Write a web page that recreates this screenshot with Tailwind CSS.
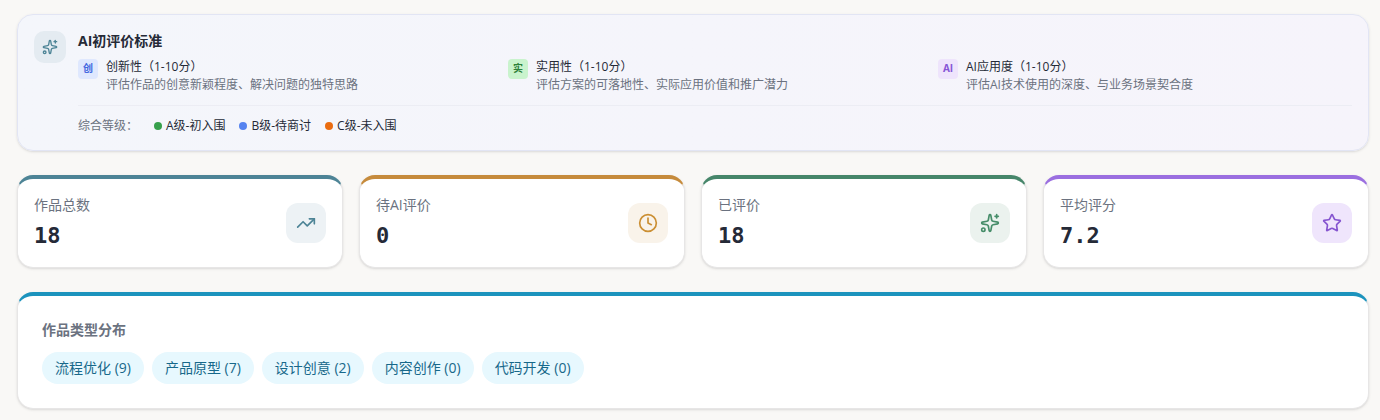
<!DOCTYPE html>
<html lang="zh-CN">
<head>
    <meta charset="UTF-8">
    <meta name="viewport" content="width=device-width, initial-scale=1.0">
    <title>AI初评价</title>
    <script src="https://cdn.jsdelivr.net/npm/@tailwindcss/browser@4"></script>
</head>
<body class="bg-[#f9f8f6] font-['Open_Sans','Noto_Sans_CJK_SC',sans-serif] text-[#252a37]">
    <!-- Shared icons -->
    <svg class="hidden">
        <symbol id="icon-sparkles" viewBox="0 0 24 24">
            <path d="M11.017 2.814a1 1 0 0 1 1.966 0l1.051 5.558a2 2 0 0 0 1.594 1.594l5.558 1.051a1 1 0 0 1 0 1.966l-5.558 1.051a2 2 0 0 0-1.594 1.594l-1.051 5.558a1 1 0 0 1-1.966 0l-1.051-5.558a2 2 0 0 0-1.594-1.594l-5.558-1.051a1 1 0 0 1 0-1.966l5.558-1.051a2 2 0 0 0 1.594-1.594z"/>
            <path d="M20 2v4"/>
            <path d="M22 4h-4"/>
            <circle cx="4" cy="20" r="2"/>
        </symbol>
    </svg>

    <main class="pt-[14px] pl-[17px] pr-[11px] pb-[11px] space-y-6">
        <!-- Criteria -->
        <section class="flex items-start gap-3 rounded-2xl border border-[#e2e5f4] bg-linear-to-r from-[#f4f6fb] to-[#f6f4fb] p-4 shadow-sm">
            <div class="flex size-8 shrink-0 items-center justify-center rounded-[10px] bg-[#e4ebf1] text-[#4d8496]">
                <svg class="size-4" fill="none" stroke="currentColor" stroke-width="2" stroke-linecap="round" stroke-linejoin="round"><use href="#icon-sparkles"/></svg>
            </div>
            <div class="flex-1">
                <h3 class="mb-2 text-sm font-bold">AI初评价标准</h3>
                <div class="grid grid-cols-3 gap-4 text-xs">
                    <div class="flex items-start gap-2">
                        <span class="flex size-5 shrink-0 items-center justify-center rounded bg-[#dfe8fe] text-[10px] font-bold text-[#4468e0]">创</span>
                        <div>
                            <p>创新性（1-10分）</p>
                            <p class="mt-0.5 text-[#6b7280]">评估作品的创意新颖程度、解决问题的独特思路</p>
                        </div>
                    </div>
                    <div class="flex items-start gap-2">
                        <span class="flex size-5 shrink-0 items-center justify-center rounded bg-[#c9f3cd] text-[10px] font-bold text-[#2c803b]">实</span>
                        <div>
                            <p>实用性（1-10分）</p>
                            <p class="mt-0.5 text-[#6b7280]">评估方案的可落地性、实际应用价值和推广潜力</p>
                        </div>
                    </div>
                    <div class="flex items-start gap-2">
                        <span class="flex size-5 shrink-0 items-center justify-center rounded bg-[#eee4fc] text-[10px] font-bold text-[#8655d6]">AI</span>
                        <div>
                            <p>AI应用度（1-10分）</p>
                            <p class="mt-0.5 text-[#6b7280]">评估AI技术使用的深度、与业务场景契合度</p>
                        </div>
                    </div>
                </div>
                <div class="mt-3 flex items-center gap-4 border-t border-[#ecedf4] pt-3 text-xs">
                    <span class="text-[#6b7280]">综合等级：</span>
                    <ul class="flex gap-[14px]">
                        <li class="flex items-center gap-1"><span class="size-2 rounded-full bg-[#37a04c]"></span>A级-初入围</li>
                        <li class="flex items-center gap-1"><span class="size-2 rounded-full bg-[#5583f0]"></span>B级-待商讨</li>
                        <li class="flex items-center gap-1"><span class="size-2 rounded-full bg-[#ea6c10]"></span>C级-未入围</li>
                    </ul>
                </div>
            </div>
        </section>

        <!-- Stats -->
        <section class="grid grid-cols-4 gap-4">
            <div class="flex items-center justify-between rounded-2xl border border-t-4 border-[#e7e6e6] border-t-[#4d8496] bg-white p-4 shadow-sm">
                <div>
                    <p class="text-sm text-[#6b7280]">作品总数</p>
                    <p class="mt-1.5 font-['DejaVu_Sans_Mono',monospace] text-[22px] leading-[30px] font-bold">18</p>
                </div>
                <div class="flex size-10 items-center justify-center rounded-xl bg-[#edf2f5] text-[#4d8496]">
                    <svg class="size-5" viewBox="0 0 24 24" fill="none" stroke="currentColor" stroke-width="2" stroke-linecap="round" stroke-linejoin="round"><path d="M16 7h6v6"/><path d="m22 7-8.5 8.5-5-5L2 17"/></svg>
                </div>
            </div>
            <div class="flex items-center justify-between rounded-2xl border border-t-4 border-[#e7e6e6] border-t-[#c68b3c] bg-white p-4 shadow-sm">
                <div>
                    <p class="text-sm text-[#6b7280]">待AI评价</p>
                    <p class="mt-1.5 font-['DejaVu_Sans_Mono',monospace] text-[22px] leading-[30px] font-bold">0</p>
                </div>
                <div class="flex size-10 items-center justify-center rounded-xl bg-[#f9f3ea] text-[#cb8f33]">
                    <svg class="size-5" viewBox="0 0 24 24" fill="none" stroke="currentColor" stroke-width="2" stroke-linecap="round" stroke-linejoin="round"><circle cx="12" cy="12" r="10"/><path d="M12 6v6l4 2"/></svg>
                </div>
            </div>
            <div class="flex items-center justify-between rounded-2xl border border-t-4 border-[#e7e6e6] border-t-[#46866a] bg-white p-4 shadow-sm">
                <div>
                    <p class="text-sm text-[#6b7280]">已评价</p>
                    <p class="mt-1.5 font-['DejaVu_Sans_Mono',monospace] text-[22px] leading-[30px] font-bold">18</p>
                </div>
                <div class="flex size-10 items-center justify-center rounded-xl bg-[#ebf2ee] text-[#468d69]">
                    <svg class="size-5" fill="none" stroke="currentColor" stroke-width="2" stroke-linecap="round" stroke-linejoin="round"><use href="#icon-sparkles"/></svg>
                </div>
            </div>
            <div class="flex items-center justify-between rounded-2xl border border-t-4 border-[#e7e6e6] border-t-[#9b6fe0] bg-white p-4 shadow-sm">
                <div>
                    <p class="text-sm text-[#6b7280]">平均评分</p>
                    <p class="mt-1.5 font-['DejaVu_Sans_Mono',monospace] text-[22px] leading-[30px] font-bold">7.2</p>
                </div>
                <div class="flex size-10 items-center justify-center rounded-xl bg-[#efe5fc] text-[#8655d0]">
                    <svg class="size-5" viewBox="0 0 24 24" fill="none" stroke="currentColor" stroke-width="2" stroke-linecap="round" stroke-linejoin="round"><path d="M11.525 2.295a.53.53 0 0 1 .95 0l2.31 4.679a2.123 2.123 0 0 0 1.595 1.16l5.166.756a.53.53 0 0 1 .294.904l-3.736 3.638a2.123 2.123 0 0 0-.611 1.878l.882 5.14a.53.53 0 0 1-.771.56l-4.618-2.428a2.122 2.122 0 0 0-1.973 0L6.396 21.01a.53.53 0 0 1-.77-.56l.881-5.139a2.122 2.122 0 0 0-.611-1.879L2.16 9.795a.53.53 0 0 1 .294-.906l5.165-.755a2.122 2.122 0 0 0 1.597-1.16z"/></svg>
                </div>
            </div>
        </section>

        <!-- Type distribution -->
        <section class="rounded-2xl border border-t-4 border-[#e7e6e6] border-t-[#1c93bd] bg-white p-6 shadow-sm">
            <h3 class="mb-3 text-sm font-bold text-[#6b7280]">作品类型分布</h3>
            <ul class="flex flex-wrap gap-2 text-sm text-[#17688a]">
                <li class="rounded-full bg-[#e7f8fe] px-[13px] py-1.5">流程优化 (9)</li>
                <li class="rounded-full bg-[#e7f8fe] px-[13px] py-1.5">产品原型 (7)</li>
                <li class="rounded-full bg-[#e7f8fe] px-[13px] py-1.5">设计创意 (2)</li>
                <li class="rounded-full bg-[#e7f8fe] px-[13px] py-1.5">内容创作 (0)</li>
                <li class="rounded-full bg-[#e7f8fe] px-[13px] py-1.5">代码开发 (0)</li>
            </ul>
        </section>
    </main>
</body>
</html>
